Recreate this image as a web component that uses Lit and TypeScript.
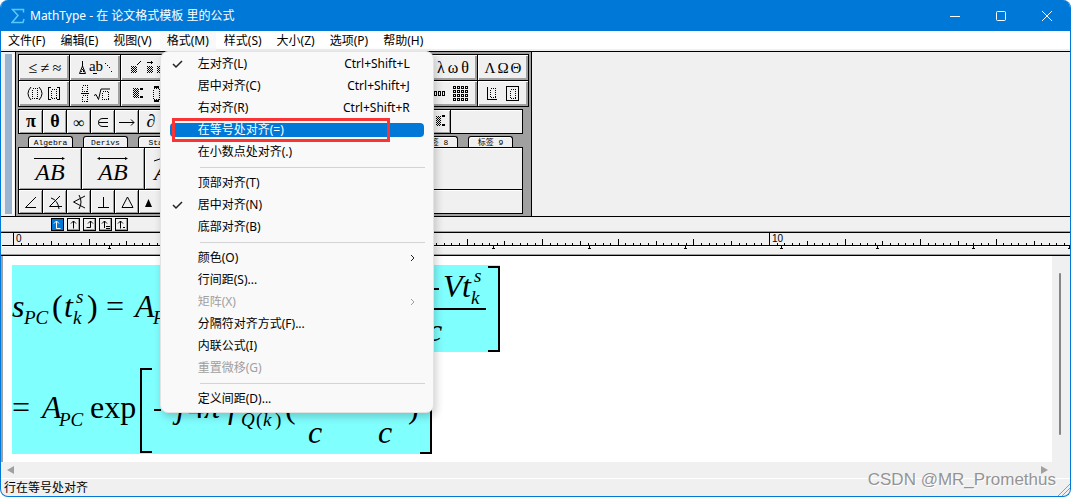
import { LitElement, html, svg, css, nothing } from "lit";
import { customElement, state } from "lit/decorators.js";
import { classMap } from "lit/directives/class-map.js";

type Entry = { label: string; keys?: string; checked?: boolean; sub?: boolean; off?: boolean; marked?: boolean } | null;

const MENUS = ["文件(F)", "编辑(E)", "视图(V)", "格式(M)", "样式(S)", "大小(Z)", "选项(P)", "帮助(H)"];

const FORMAT_MENU: Entry[] = [
  { label: "左对齐(L)", keys: "Ctrl+Shift+L", checked: true },
  { label: "居中对齐(C)", keys: "Ctrl+Shift+J" },
  { label: "右对齐(R)", keys: "Ctrl+Shift+R" },
  { label: "在等号处对齐(=)", marked: true },
  { label: "在小数点处对齐(.)" },
  null,
  { label: "顶部对齐(T)" },
  { label: "居中对齐(N)", checked: true },
  { label: "底部对齐(B)" },
  null,
  { label: "颜色(O)", sub: true },
  { label: "行间距(S)..." },
  { label: "矩阵(X)", sub: true, off: true },
  { label: "分隔符对齐方式(F)..." },
  { label: "内联公式(I)" },
  { label: "重置微移(G)", off: true },
  null,
  { label: "定义间距(D)..." },
];

/* Dotted slot of a template icon */
const slot = (x: number, y: number, w: number, h: number) =>
  svg`<rect class="dot" x=${x + 0.5} y=${y + 0.5} width=${w} height=${h}/>`;
/* Checkered block of a template icon */
const block = (x: number, y: number, w: number, h: number) => {
  const rows = [];
  for (let r = 0; r < h; r++) rows.push(svg`<path class="dot" stroke-dashoffset=${r % 2} d="M${x} ${y + r + 0.5}h${w}"/>`);
  return rows;
};
const box = (x: number, y: number, h = 2) => svg`<rect class="ln" x=${x + 0.5} y=${y + 0.5} width="2" height=${h}/>`;
const glyph = (x: number, y: number, t: string, size = 16) =>
  svg`<text x=${x} y=${y} font-size=${size} text-anchor="middle">${t}</text>`;
const grid = () => {
  const out = [];
  for (let r = 0; r < 4; r++) for (let c = 0; c < 4; c++) out.push(box(26 + c * 4, 5 + r * 4));
  return out;
};

const PALETTES: Record<number, unknown> = {
  0: svg`${glyph(14, 18, "≤")}${glyph(26, 18, "≠")}${glyph(38, 18, "≈")}`,
  1: svg`<path class="ln" d="M12.500 6v5"/><path class="ln sm" d="M12.500 11l-3 7.500h6z"/>${slot(11, 14, 2, 2)}${glyph(26, 16, "ab", 15)}<path class="ln" d="M23 18.500h4"/><path class="fl" d="M35 8h1v1h-1zM37 10h1v1h-1zM39 12h1v1h-1zM41 16h1v1h-1z"/>`,
  2: svg`${block(10, 11, 6, 7)}<path class="ln sm" d="M16 10l4-4"/>${block(26, 11, 6, 7)}<path class="ln" d="M26 7.500h6M30.500 6v3"/>${block(36, 11, 6, 7)}`,
  8: svg`${glyph(14, 18, "λ")}${glyph(26, 18, "ω")}${glyph(38, 18, "θ")}`,
  9: svg`${glyph(12, 18, "Λ", 15)}${glyph(25, 18, "Ω", 15)}${glyph(38, 18, "Θ", 15)}`,
  10: svg`<path class="ln sm" d="M12 6q-6 6.500 0 13M20 6q6 6.500 0 13"/>${slot(13, 7, 5, 10)}<path class="ln" d="M32 6.500h-2.500v12h2.500M38 6.500h2.500v12h-2.500"/>${slot(32, 8, 5, 9)}`,
  11: svg`${slot(12, 4, 5, 6)}<path class="ln" d="M11 12.500h8"/>${slot(12, 14, 5, 6)}<path class="ln sm" d="M24 14.500l2-1 2.500 5 2.500-10.500h9"/>${slot(32, 10, 6, 8)}`,
  12: svg`${block(12, 7, 6, 10)}<path class="fl" d="M19 7h3v2h-3zM19 15h3v2h-3z"/>${slot(32, 7, 6, 11)}<path class="fl" d="M33 5h5v2h-5zM33 19h5v2h-5z"/>`,
  18: svg`${box(7, 10, 4)}${box(11, 10, 4)}${box(15, 10, 4)}${grid()}`,
  19: svg`<path class="ln" d="M9.500 6v12.500h9"/>${slot(12, 7, 5, 9)}<rect class="ln" x="28.500" y="5.500" width="12" height="14"/>${slot(32, 8, 5, 9)}`,
};

const big = (t: string) => svg`<text x="12" y="17" font-size="18" font-weight="bold" text-anchor="middle">${t}</text>`;
const SYMBOLS: Record<number, unknown> = {
  0: big("π"),
  1: big("θ"),
  2: glyph(12, 18, "∞"),
  3: svg`<path class="ln sm" d="M17 8.500h-5q-4.500 0-4.500 4t4.500 4h5M8 12.500h9"/>`,
  4: svg`<path class="ln" d="M4 12.500h15"/><path class="ln sm" d="M16 9.500l3 3-3 3"/>`,
  5: big("∂"),
  17: svg`${block(9, 6, 5, 10)}<path class="fl" d="M15 5h3v2h-3zM15 14h3v2h-3z"/>`,
};
const ANGLES: Record<number, unknown> = {
  0: svg`<path class="ln sm" d="M17 7L6.500 17.500H17"/>`,
  1: svg`<path class="ln sm" d="M17 6L6.500 16.500H19M8 8q7 2 8 11"/>`,
  2: svg`<path class="ln sm" d="M18 6L6.500 12 18 18M12 5q4 7 0 14"/>`,
  3: svg`<path class="ln" d="M12.500 7v10M7 17.500h11"/>`,
  4: svg`<path class="ln sm" d="M12.500 7L7 17.500h11z"/>`,
  5: svg`<path class="fl" d="M9.500 9L6 17h7z"/>`,
};

const TABS = ["Algebra", "Derivs", "Stats", "Matrices", "Sets", "Trig", "Geometry", "标签 8", "标签 9"];
const TAB_STOPS: [string, unknown][] = [
  ["左对齐制表位", svg`<path class="ln" d="M5.500 3v7.500h4M3 5.500l2.500-2.500 2.500 2.500"/>`],
  ["居中制表位", svg`<path class="ln" d="M6.500 3v7.500M4 5.500l2.500-2.500 2.500 2.500"/>`],
  ["右对齐制表位", svg`<path class="ln" d="M7.500 3v6.500h-4M5 5.500l2.500-2.500 2.500 2.500"/>`],
  ["等号制表位", svg`<path class="ln" d="M5.500 3v7M3 5.500l2.500-2.500 2.500 2.500M7 8.500h4M7 10.500h4"/>`],
  ["小数点制表位", svg`<path class="ln" d="M5.500 3v7.500M3 5.500l2.500-2.500 2.500 2.500M8 9.500h2"/>`],
];

@customElement("tool-panel")
class ToolPanel extends LitElement {
  static styles = css`
    :host { display: flex; align-items: stretch; background: #f0f0f0; border-top: 1px solid #000; border-bottom: 1px solid #000; }
    .grip { width: 7px; margin: 2px 3px 2px 4px; background: #99b4d1; box-shadow: 2px 0 #fff; }
    .panel { background: #a0a0a0; border: solid #000; border-width: 0 1px; padding: 2px; display: flex; flex-direction: column; align-items: flex-start; gap: 2px; }
    button { appearance: none; margin: 0; border: 0; padding: 0; background: #f0f0f0; font: inherit; color: #000; display: block; }
    svg { display: block; font-family: "Liberation Serif", "DejaVu Serif", serif; fill: #000; }
    .palettes { display: grid; grid-template-columns: repeat(10, 50px); grid-auto-rows: 25px; gap: 1px; padding: 1px; background: #000; }
    .palettes button { box-shadow: inset 1px 1px #fff, inset -2px -2px #a0a0a0; }
    .row { display: flex; gap: 1px; padding: 1px; background: #000; box-sizing: border-box; width: 505px; }
    .row button { width: 23px; height: 23px; flex: none; box-shadow: inset 1px 1px #fff, inset -1px -1px #a0a0a0; }
    .rest { flex: 1; background: #f0f0f0; box-shadow: inset 0 1px #fff; }
    .book { width: 505px; }
    .tabs { display: flex; gap: 10px; padding-left: 10px; }
    .tabs button { width: 45px; height: 11px; box-sizing: border-box; border: 1px solid #000; border-bottom: 0; border-radius: 3px 3px 0 0; font: 8px/11px "Liberation Mono", "Noto Sans CJK SC", monospace; box-shadow: inset 1px 1px #fff; white-space: nowrap; }
    .row.large { padding-bottom: 0; }
    .row.large button { width: 62px; height: 41px; }
    .dot { fill: none; stroke: #000; stroke-dasharray: 1 1; shape-rendering: crispEdges; }
    .ln { fill: none; stroke: #000; shape-rendering: crispEdges; }
    .sm { shape-rendering: auto; }
    .fl { fill: #000; }
    .it { font-style: italic; }
  `;
  private over(i: number) {
    const ab = svg`<text class="it" x="31" y="32" font-size="24" text-anchor="middle">AB</text>`;
    if (i === 0) return svg`${ab}<path class="ln" d="M15 10.500h30"/><path class="fl" d="M43 9l3 1.500-3 1.500z"/>`;
    if (i === 1) return svg`${ab}<path class="ln" d="M16 10.500h29"/><path class="fl" d="M43 9l3 1.500-3 1.500zM18 9l-3 1.500 3 1.500z"/>`;
    if (i === 2) return svg`<text class="it" x="9" y="32" font-size="24">ABC</text><path class="ln sm" d="M9 13q22-10 44 0"/>`;
    return nothing;
  }
  render() {
    const n = (k: number) => Array.from({ length: k }, (_, i) => i);
    return html`
      <div class="grip"></div>
      <div class="panel">
        <div class="palettes">
          ${n(20).map((i) => html`<button aria-label="符号面板 ${i + 1}"><svg width="50" height="25">${PALETTES[i] ?? nothing}</svg></button>`)}
        </div>
        <div class="row">
          ${n(18).map((i) => html`<button aria-label="符号 ${i + 1}"><svg width="23" height="23">${SYMBOLS[i] ?? nothing}</svg></button>`)}
          <div class="rest"></div>
        </div>
        <div class="book">
          <div class="tabs">${TABS.map((t) => html`<button>${t}</button>`)}</div>
          <div class="row large">
            ${n(6).map((i) => html`<button aria-label="表达式 ${i + 1}"><svg width="62" height="41">${this.over(i)}</svg></button>`)}
            <div class="rest"></div>
          </div>
          <div class="row">
            ${n(16).map((i) => html`<button aria-label="几何符号 ${i + 1}"><svg width="23" height="23">${ANGLES[i] ?? nothing}</svg></button>`)}
            <div class="rest"></div>
          </div>
        </div>
      </div>
    `;
  }
}

@customElement("tab-ruler")
class TabRuler extends LitElement {
  static styles = css`
    :host { display: block; background: #f0f0f0; }
    .stops { display: flex; gap: 3px; height: 13px; padding: 1px 0 0 50px; border-bottom: 1px solid #a0a0a0; box-shadow: 0 1px #000; }
    .stops button { appearance: none; width: 13px; height: 13px; box-sizing: border-box; margin: 0; padding: 0; border: 1px solid #000; background: #f0f0f0; box-shadow: inset -1px -1px #a0a0a0; }
    .stops button.on { background: #0078d7; box-shadow: none; }
    .stops svg { display: block; margin: -1px; }
    .ln { fill: none; stroke: #000; }
    .on .ln { stroke: #fff; }
    .scale { display: block; width: 100%; height: 21px; margin-top: 1px; border-bottom: 1px solid #a0a0a0; box-shadow: 0 1px #000; shape-rendering: crispEdges; font: 10px "Liberation Sans", Arial, sans-serif; }
    .base { fill: #000; }
    .lite { fill: #fff; }
  `;
  @state() private stop = 0;
  @state() private span = window.innerWidth;
  private onResize = () => { this.span = window.innerWidth; };
  connectedCallback() { super.connectedCallback(); window.addEventListener("resize", this.onResize); }
  disconnectedCallback() { super.disconnectedCallback(); window.removeEventListener("resize", this.onResize); }
  render() {
    const ticks = [];
    for (let i = 0; 12 + i * 7.56 < this.span; i++) {
      const x = 12 + Math.round(i * 7.56);
      const h = i % 100 === 0 ? 12 : i % 10 === 0 ? 6 : i % 5 === 0 ? 4 : 2;
      ticks.push(svg`<rect class="base" x=${x} y=${12 - h} width="1" height=${h}/>`);
      if (i % 100 === 0) ticks.push(svg`<text x=${x + 3} y="9">${i / 10}</text>`);
    }
    for (let x = 108; x < this.span; x += 96) {
      ticks.push(svg`<rect class="base" x=${x} y="13" width="1" height="3"/><rect class="base" x=${x - 1} y="15" width="3" height="1"/>`);
    }
    return html`
      <div class="stops">
        ${TAB_STOPS.map(([name, art], i) => html`<button aria-label=${name} class=${classMap({ on: i === this.stop })} @click=${() => (this.stop = i)}><svg width="13" height="13">${art}</svg></button>`)}
      </div>
      <svg class="scale"><rect class="base" x="1" y="12" width="100%" height="1"/><rect class="lite" x="1" y="13" width="100%" height="1"/>${ticks}</svg>
    `;
  }
}

@customElement("equation-view")
class EquationView extends LitElement {
  static styles = css`
    :host { display: block; }
    svg { display: block; font: italic 32px "Liberation Serif", "Times New Roman", serif; }
    .sel { fill: #80ffff; }
    .s { font-size: 19px; }
    .up { font-style: normal; }
    .rule { fill: none; stroke: #000; stroke-width: 2; }
  `;
  render() {
    return html`<svg width="520" height="200" viewBox="1 256 520 200" role="img" aria-label="公式">
      <rect class="sel" x="12" y="265" width="488" height="87"/>
      <rect class="sel" x="12" y="352" width="420" height="102"/>
      <text x="12" y="317">s</text><text class="s" x="24" y="324">PC</text>
      <text class="up" x="52" y="317">(</text><text x="64" y="317">t</text>
      <text class="s" x="76" y="303">s</text><text class="s" x="73" y="324">k</text>
      <text class="up" x="87" y="317">)</text><text class="up" x="106" y="317">=</text>
      <text x="135" y="317">A</text><text class="s" x="153" y="324">PC</text>
      <path class="rule" d="M420 289h19M300 309h186M488 267h11v84h-11"/>
      <text x="443" y="297">V</text><text x="462" y="297">t</text>
      <text class="s" x="474" y="282">s</text><text class="s" x="471" y="304">k</text>
      <text x="428" y="341">c</text>
      <text class="up" x="12" y="418">=</text><text x="42" y="418">A</text><text class="s" x="59" y="426">PC</text>
      <text class="up" x="90" y="418">exp</text>
      <path class="rule" d="M152 369h-11v83h11M154 410h7M420 453h11v-83h-11"/>
      <text x="176" y="418">j</text><text class="up" x="188" y="418">4</text><text x="204" y="418">π</text><text x="228" y="418">f</text>
      <text class="s" x="241" y="426">Q</text><text class="s up" x="256" y="426">(</text><text class="s" x="263" y="426">k</text><text class="s up" x="275" y="426">)</text>
      <text class="up" x="285" y="418">(</text><text x="308" y="443">c</text><text x="378" y="443">c</text><text class="up" x="408" y="418">)</text>
    </svg>`;
  }
}

@customElement("format-menu")
class FormatMenu extends LitElement {
  static styles = css`
    :host { display: block; box-sizing: border-box; width: 274px; padding: 1px 0 2px; background: #f9f9f9; border: 1px solid #e3e3e3; border-radius: 8px; box-shadow: 2px 4px 8px rgba(0, 0, 0, 0.2); }
    button { appearance: none; position: relative; display: grid; grid-template-columns: 37px 1fr auto; align-items: center; width: 100%; height: 22px; margin: 0; padding: 0 23px 0 0; border: 0; background: none; color: #000; text-align: left; font: 12px/22px "Noto Sans", "Noto Sans CJK SC", sans-serif; }
    button:disabled { color: #a0a0a0; }
    .label { grid-column: 2; grid-row: 1; }
    .keys { grid-column: 3; grid-row: 1; }
    .tick { grid-column: 1; grid-row: 1; margin-left: 11px; }
    .arrow { grid-column: 3; grid-row: 1; margin-right: -13px; }
    .tick, .arrow { fill: none; stroke: #222; }
    button:disabled .arrow { stroke: #a0a0a0; }
    .tick { stroke-width: 1.5; }
    .marked { color: #fff; isolation: isolate; }
    .marked::before { content: ""; position: absolute; z-index: -1; inset: 4px 9px; border-radius: 4px; background: #0078d7; }
    .frame { position: absolute; left: 11px; top: -1px; width: 218px; height: 24px; box-sizing: border-box; border: 3px solid #fa3434; }
    hr { height: 1px; margin: 4px 8px 4px 39px; border: 0; background: #d4d4d4; }
  `;
  render() {
    return html`${FORMAT_MENU.map((e) => e === null ? html`<hr />` : html`
      <button role="menuitem" ?disabled=${!!e.off} class=${classMap({ marked: !!e.marked })}>
        ${e.checked ? html`<svg class="tick" width="12" height="10"><path d="M1 5l3 3 6-6"/></svg>` : nothing}
        <span class="label">${e.label}</span>
        ${e.keys ? html`<span class="keys">${e.keys}</span>` : nothing}
        ${e.sub ? html`<svg class="arrow" width="6" height="8"><path d="M1 1l3 3-3 3"/></svg>` : nothing}
        ${e.marked ? html`<span class="frame"></span>` : nothing}
      </button>`)}`;
  }
}

@customElement("app-root")
class AppRoot extends LitElement {
  static styles = css`
    :host { display: flex; flex-direction: column; position: relative; box-sizing: border-box; min-height: 100vh; border: 1px solid #0078d7; border-top: 0; border-radius: 8px; overflow: hidden; background: #f0f0f0; color: #000; font: 12px/18px "Noto Sans", "Noto Sans CJK SC", sans-serif; }
    button { appearance: none; margin: 0; border: 0; padding: 0; background: none; font: inherit; color: inherit; }
    .title { display: flex; align-items: center; height: 31px; padding-left: 10px; gap: 5px; background: #0078d7; color: #fff; }
    .name { flex: 1; }
    .title svg, .scroll svg, .grip { display: block; }
    .win { display: flex; }
    .win button { width: 46px; height: 31px; display: grid; place-items: center; }
    .win svg { fill: none; stroke: #fff; }
    .menus { display: flex; gap: 1px; height: 18px; background: #fff; border-bottom: 2px solid #f0f0f0; }
    .menu { position: relative; }
    .menu > button { height: 20px; line-height: 20px; padding: 0 7px; }
    .menu.open > button { background: #f9f9f9; }
    format-menu { position: absolute; z-index: 2; left: 0; top: 20px; }
    .work { flex: 1; display: grid; grid-template-columns: 1fr 18px; grid-template-rows: 1fr 16px; margin-top: 1px; }
    .page { background: #fff; min-width: 0; overflow: hidden; box-shadow: inset 2px 0 #a0a0a0; }
    .vbar { padding: 17px 0 0 7px; }
    .thumb { width: 2px; height: 162px; background: #868686; border-radius: 1px; }
    .scroll { grid-column: 1 / -1; display: flex; justify-content: space-between; align-items: center; padding: 0 22px 0 6px; fill: #a0a0a0; }
    .status { display: flex; justify-content: space-between; align-items: flex-end; height: 17px; padding-left: 3px; border-top: 1px solid #fff; line-height: 16px; }
    .grip { stroke: #999; fill: none; }
    .mark { position: absolute; right: 14px; bottom: 6px; font: 17px/20px "Liberation Sans", Arial, sans-serif; color: #949494; text-shadow: 1px 1px #fff; }
  `;
  @state() private open = 3;
  render() {
    return html`
      <header class="title">
        <svg width="14" height="16" viewBox="0 0 14 16" fill="none" stroke="#5ac8fa" stroke-width="1.500"><path d="M12.500 4.500V1.500H1.500L7 7.500 1 14.500H12L13 11"/></svg>
        <span class="name">MathType - 在 论文格式模板 里的公式</span>
        <div class="win">
          <button aria-label="最小化"><svg width="10" height="10"><path d="M0 5.500h10"/></svg></button>
          <button aria-label="最大化"><svg width="10" height="10"><rect x=".500" y=".500" width="9" height="9" rx="1"/></svg></button>
          <button aria-label="关闭"><svg width="10" height="10"><path d="M0 0l10 10M10 0L0 10"/></svg></button>
        </div>
      </header>
      <nav class="menus">
        ${MENUS.map((m, i) => html`<div class=${classMap({ menu: true, open: i === this.open })}>
          <button @click=${() => (this.open = i)}>${m}</button>
          ${i === 3 && this.open === 3 ? html`<format-menu role="menu"></format-menu>` : nothing}
        </div>`)}
      </nav>
      <tool-panel></tool-panel>
      <tab-ruler></tab-ruler>
      <main class="work">
        <div class="page"><equation-view></equation-view></div>
        <div class="vbar"><div class="thumb"></div></div>
        <div class="scroll">
          <button aria-label="向左滚动"><svg width="7" height="8"><path d="M7 0v8L0 4z"/></svg></button>
          <button aria-label="向右滚动"><svg width="7" height="8"><path d="M0 0v8l7-4z"/></svg></button>
        </div>
      </main>
      <footer class="status">
        <span>行在等号处对齐</span>
        <svg class="grip" width="12" height="12"><path d="M0 12L12 0M4 12L12 4M8 12L12 8"/></svg>
      </footer>
      <span class="mark">CSDN @MR_Promethus</span>
    `;
  }
}
